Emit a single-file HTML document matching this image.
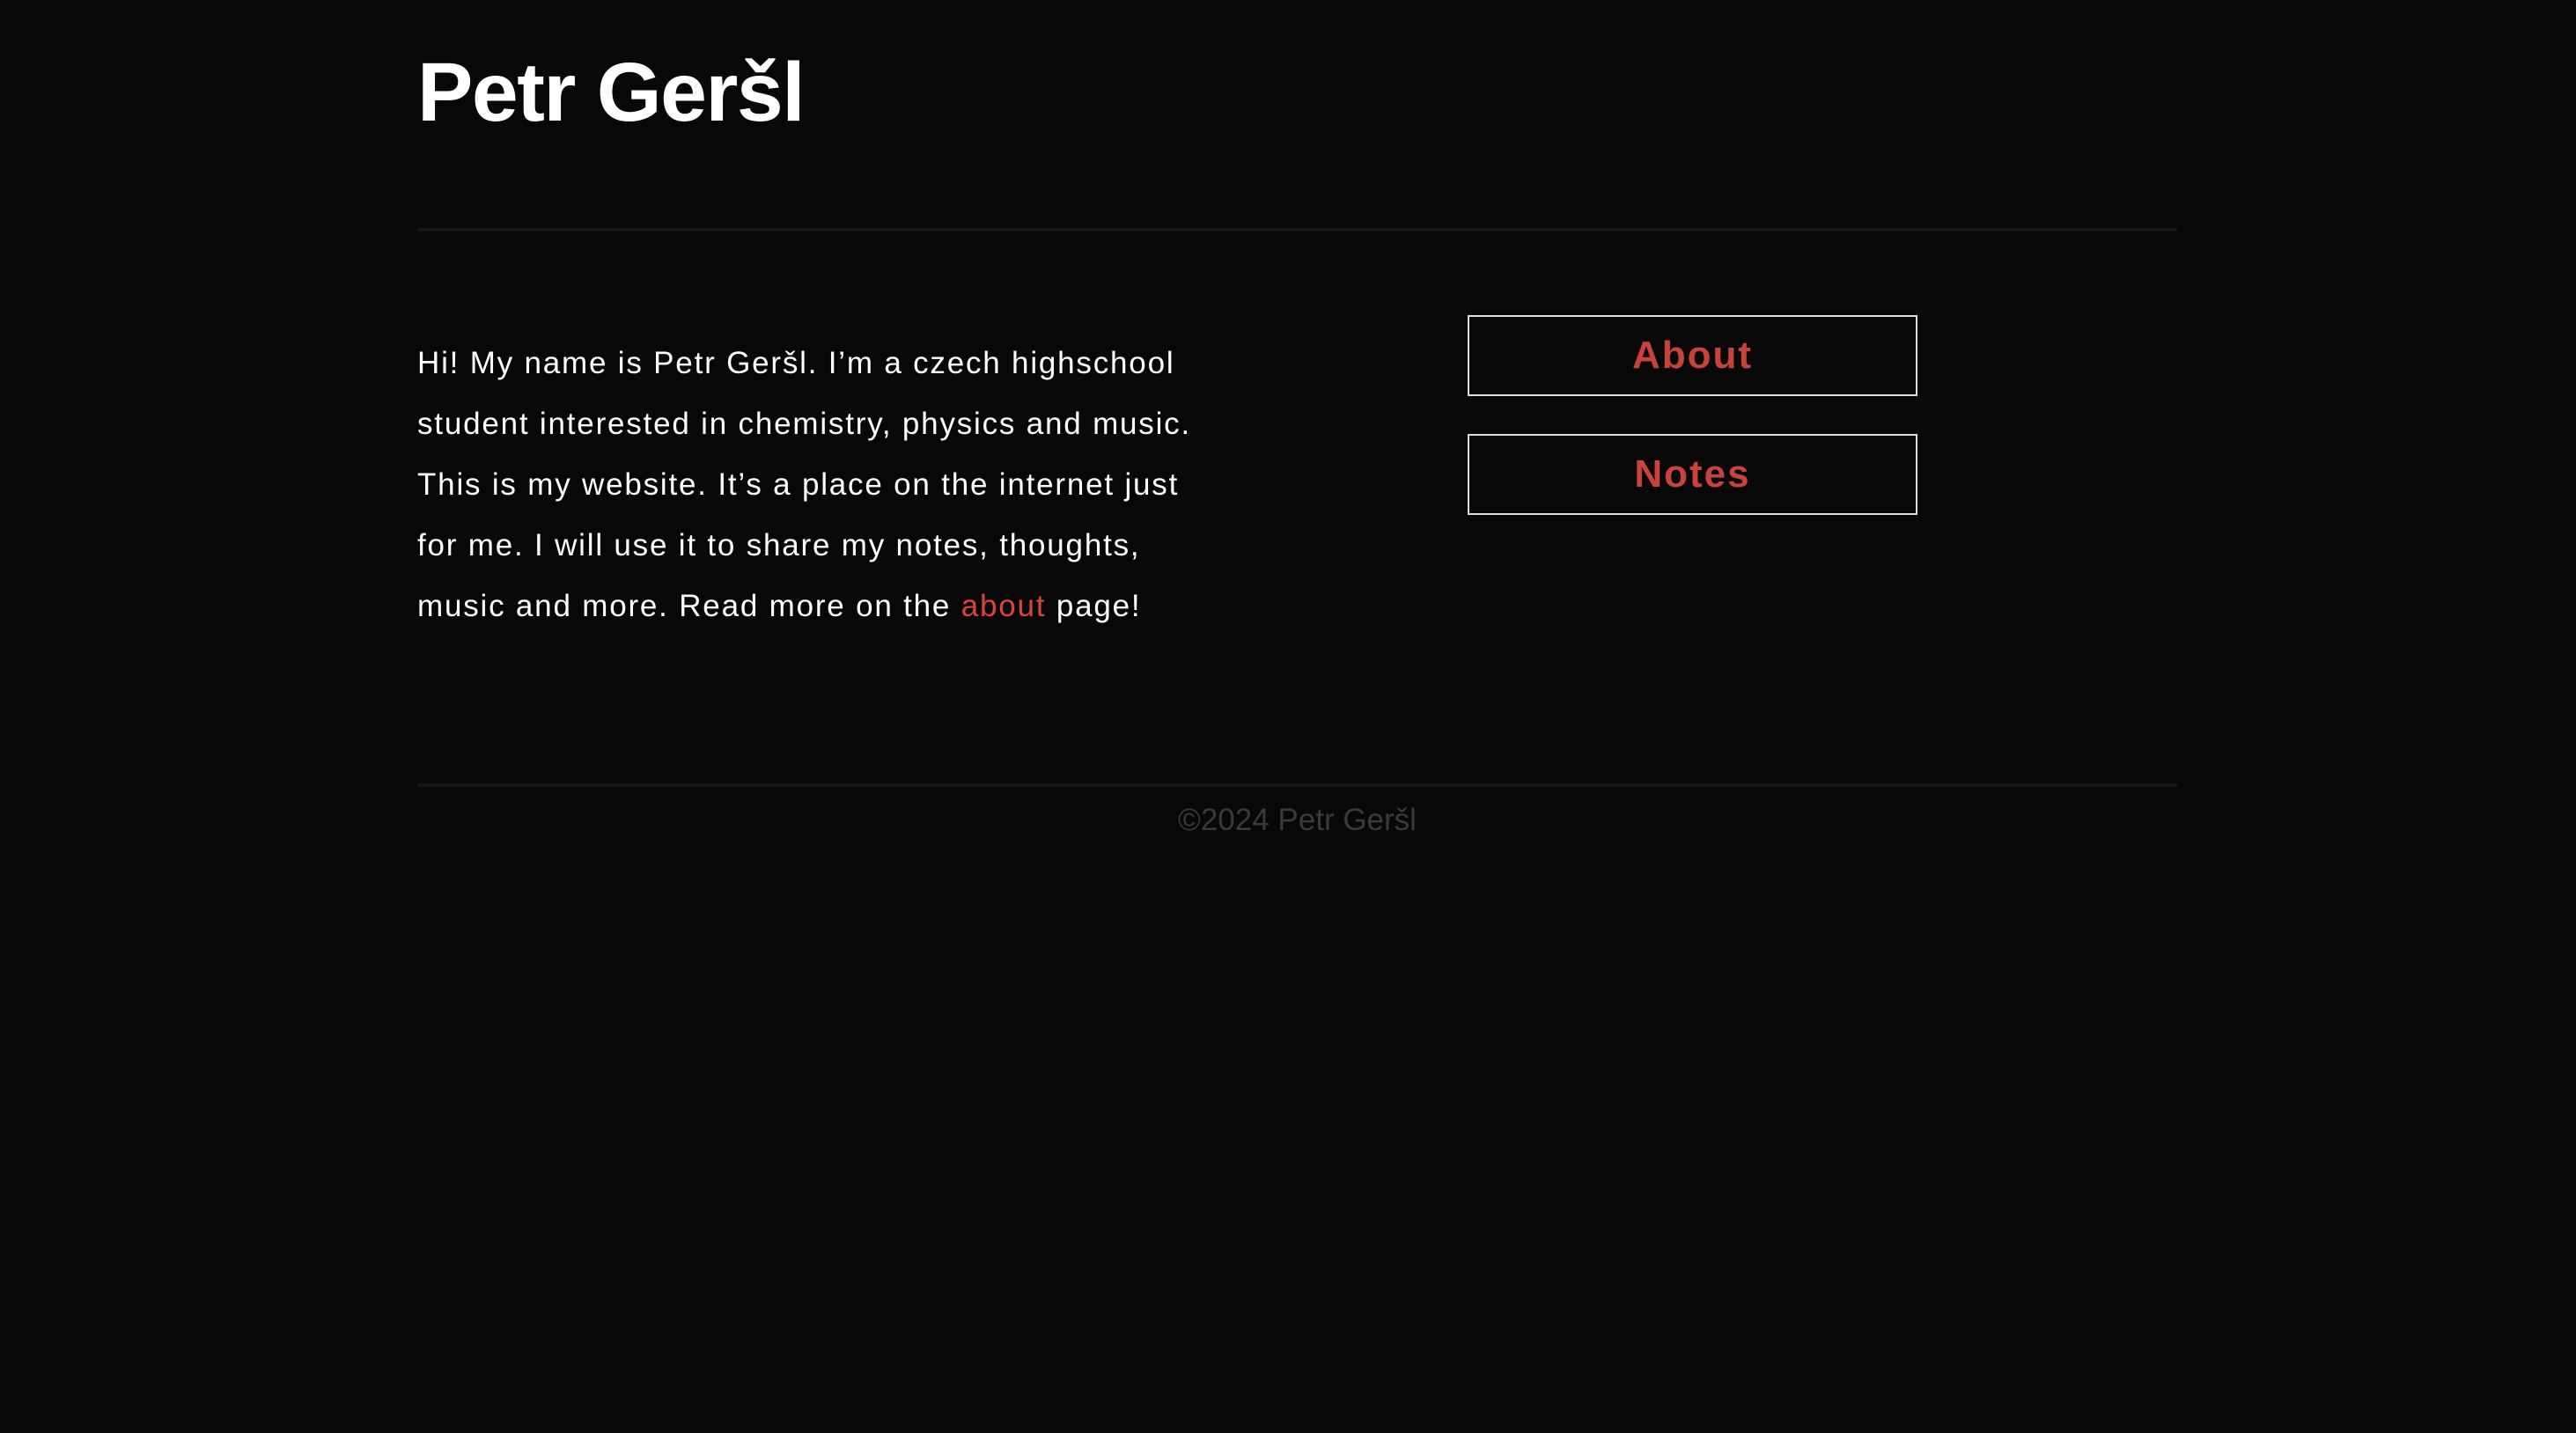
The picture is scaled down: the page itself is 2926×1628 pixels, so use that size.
<!DOCTYPE html>
<html><head><meta charset="utf-8"><style>
html,body{margin:0;padding:0;background:#080808;width:2926px;height:1628px;overflow:hidden;font-family:"Liberation Sans",Arial,sans-serif}
.wrap{position:absolute;left:474px;width:1999px;top:0}
h1{position:absolute;left:0;top:51px;margin:0;font-size:95px;font-weight:bold;color:#fff;white-space:nowrap;letter-spacing:-1.5px}
.rule{position:absolute;left:0;width:1999px;height:4px;background:#161616}
p{position:absolute;left:0;top:378px;margin:0;font-size:35px;line-height:69px;letter-spacing:1.8px;color:#fff;white-space:nowrap}
p a{color:#d9443c;text-decoration:none}
.btn{position:absolute;left:1193px;width:507px;height:88px;border:2px solid #ddd;color:#c9423c;font-weight:bold;font-size:44px;letter-spacing:2px;text-align:center;line-height:88px}
.foot{position:absolute;left:0;width:1999px;top:912px;text-align:center;color:#3a3a3a;font-size:35px}
</style></head><body>
<div class="wrap">
<h1>Petr Geršl</h1>
<div class="rule" style="top:259px"></div>
<p>Hi! My name is Petr Geršl. I’m a czech highschool<br>student interested in chemistry, physics and music.<br>This is my website. It’s a place on the internet just<br>for me. I will use it to share my notes, thoughts,<br>music and more. Read more on the <a>about</a> page!</p>
<div class="btn" style="top:358px">About</div>
<div class="btn" style="top:493px">Notes</div>
<div class="rule" style="top:890px"></div>
<div class="foot">©2024 Petr Geršl</div>
</div>
</body></html>
